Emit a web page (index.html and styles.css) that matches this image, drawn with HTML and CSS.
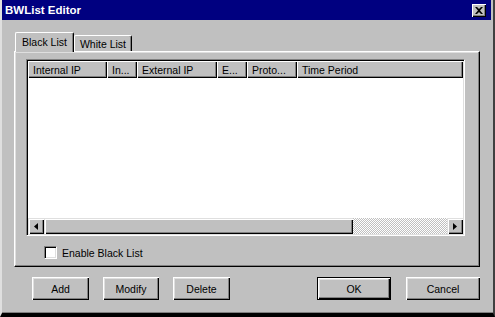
FILE: index.html
```html
<!DOCTYPE html>
<html>
<head>
<meta charset="utf-8">
<title>BWList Editor</title>
<link rel="stylesheet" href="styles.css">
</head>
<body>
<div class="window">
  <div class="titlebar">
    <span class="title">BWList Editor</span>
    <div class="close">
      <svg width="8" height="7" viewBox="0 0 8 7"><path d="M0 0h2l2 2 2-2h2L5 3.5 8 7H6L4 5 2 7H0l3-3.5z" fill="#000"/></svg>
    </div>
  </div>
  <div class="content">
    <div class="tabs">
      <div class="tab active">Black List</div>
      <div class="tab">White List</div>
    </div>
    <div class="panel">
      <div class="listview">
        <div class="header">
          <div class="col c1">Internal IP</div>
          <div class="col c2">In...</div>
          <div class="col c3">External IP</div>
          <div class="col c4">E...</div>
          <div class="col c5">Proto...</div>
          <div class="col c6">Time Period</div>
        </div>
        <div class="listbody"></div>
        <div class="hscroll">
          <div class="arrow"><svg width="4" height="7" viewBox="0 0 4 7"><path d="M4 0v7L0 3.5z" fill="#000"/></svg></div>
          <div class="thumb"></div>
          <div class="track"></div>
          <div class="arrow"><svg width="4" height="7" viewBox="0 0 4 7"><path d="M0 0v7l4-3.5z" fill="#000"/></svg></div>
        </div>
      </div>
      <div class="check"><span class="box"></span><span class="label">Enable Black List</span></div>
    </div>
    <div class="buttons">
      <div class="group left">
        <div class="btn w57">Add</div>
        <div class="btn w56">Modify</div>
        <div class="btn w57">Delete</div>
      </div>
      <div class="group right">
        <div class="btn w74 default">OK</div>
        <div class="btn w74">Cancel</div>
      </div>
    </div>
  </div>
</div>
</body>
</html>
```

FILE: styles.css
```css
* { box-sizing: border-box; }
html, body { margin: 0; padding: 0; }
body {
  background: #c0c0c0;
  font-family: "Liberation Sans", Arial, sans-serif;
  font-size: 10.5px;
  color: #000;
}
.window {
  width: 495px;
  height: 317px;
  display: flex;
  flex-direction: column;
  background: #c0c0c0;
  border-left: 2px solid #dfdfdf;
  border-right: 2px solid #404040;
  border-bottom: 4px solid #000;
  padding-right: 2px;
  box-shadow: inset 0 -1px #808080;
}
.titlebar {
  height: 20px;
  background: #000080;
  display: flex;
  align-items: center;
  justify-content: space-between;
  padding: 0 5px 0 3px;
}
.title {
  color: #fff;
  font-weight: bold;
  font-size: 11.5px;
}
.close {
  width: 14px;
  height: 13px;
  background: #c0c0c0;
  box-shadow: inset 1px 1px #fff, inset -1px -1px #000, inset -2px -2px #808080;
  display: flex;
  align-items: center;
  justify-content: center;
  padding-right: 1px;
}
.content {
  flex: 1;
  padding: 12px 11px 0 12px;
  display: flex;
  flex-direction: column;
}
.tabs {
  height: 19px;
  display: flex;
  align-items: flex-end;
  padding-left: 1px;
  position: relative;
  z-index: 1;
}
.tab {
  height: 16px;
  width: 58px;
  display: flex;
  align-items: center;
  justify-content: center;
  background: #c0c0c0;
  border-top: 1px solid #fff;
  border-left: 1px solid #fff;
  border-right: 1px solid #000;
  border-radius: 2px 2px 0 0;
  box-shadow: inset -1px 0 #808080;
}
.tab.active {
  height: 20px;
  width: 59px;
  margin-bottom: -1px;
  padding-bottom: 2px;
}
.panel {
  height: 216px;
  border-top: 1px solid #fff;
  border-left: 1px solid #fff;
  border-right: 1px solid #000;
  border-bottom: 1px solid #000;
  box-shadow: inset -1px -1px #808080, inset 1px 1px #dfdfdf;
  padding: 7px 0 0 11px;
  display: flex;
  flex-direction: column;
}
.listview {
  width: 439px;
  height: 177px;
  border-top: 1px solid #808080;
  border-left: 1px solid #808080;
  border-right: 1px solid #fff;
  border-bottom: 1px solid #fff;
  box-shadow: inset 1px 1px #000, inset -1px -1px #dfdfdf;
  padding: 1px;
  display: flex;
  flex-direction: column;
}
.header {
  height: 17px;
  display: flex;
}
.col {
  height: 17px;
  background: #c0c0c0;
  box-shadow: inset 1px 1px #fff, inset -1px -1px #000, inset -2px -2px #808080;
  padding-left: 5px;
  display: flex;
  align-items: center;
  white-space: nowrap;
  overflow: hidden;
}
.c1 { width: 79px; }
.c2 { width: 30px; }
.c3 { width: 80px; }
.c4 { width: 30px; }
.c5 { width: 50px; }
.c6 { flex: 1; }
.listbody {
  flex: 1;
  background: #fff;
}
.hscroll {
  height: 16px;
  display: flex;
}
.arrow {
  width: 16px;
  height: 16px;
  background: #c0c0c0;
  box-shadow: inset 1px 1px #dfdfdf, inset 2px 2px #fff, inset -1px -1px #000, inset -2px -2px #808080;
  display: flex;
  align-items: center;
  justify-content: center;
}
.thumb {
  width: 309px;
  height: 16px;
  background: #c0c0c0;
  box-shadow: inset 1px 1px #dfdfdf, inset 2px 2px #fff, inset -1px -1px #000, inset -2px -2px #808080;
}
.track {
  flex: 1;
  background: repeating-conic-gradient(#fff 0 25%, #c0c0c0 0 50%) 0 0 / 2px 2px;
}
.check {
  margin: 10px 0 0 18px;
  display: flex;
  align-items: center;
  height: 13px;
}
.box {
  width: 13px;
  height: 13px;
  background: #fff;
  border-top: 1px solid #808080;
  border-left: 1px solid #808080;
  border-right: 1px solid #fff;
  border-bottom: 1px solid #fff;
  box-shadow: inset 1px 1px #000, inset -1px -1px #dfdfdf;
}
.label {
  margin-left: 5px;
}
.buttons {
  margin-top: 10px;
  padding-left: 18px;
  display: flex;
  justify-content: space-between;
}
.group {
  display: flex;
}
.group.left { gap: 14px; }
.group.right { gap: 15px; }
.btn {
  height: 23px;
  background: #c0c0c0;
  box-shadow: inset 1px 1px #fff, inset -1px -1px #000, inset -2px -2px #808080, inset 2px 2px #dfdfdf;
  display: flex;
  align-items: center;
  justify-content: center;
}
.w56 { width: 56px; }
.w57 { width: 57px; }
.w74 { width: 74px; }
.btn.default {
  border: 1px solid #000;
}
```
